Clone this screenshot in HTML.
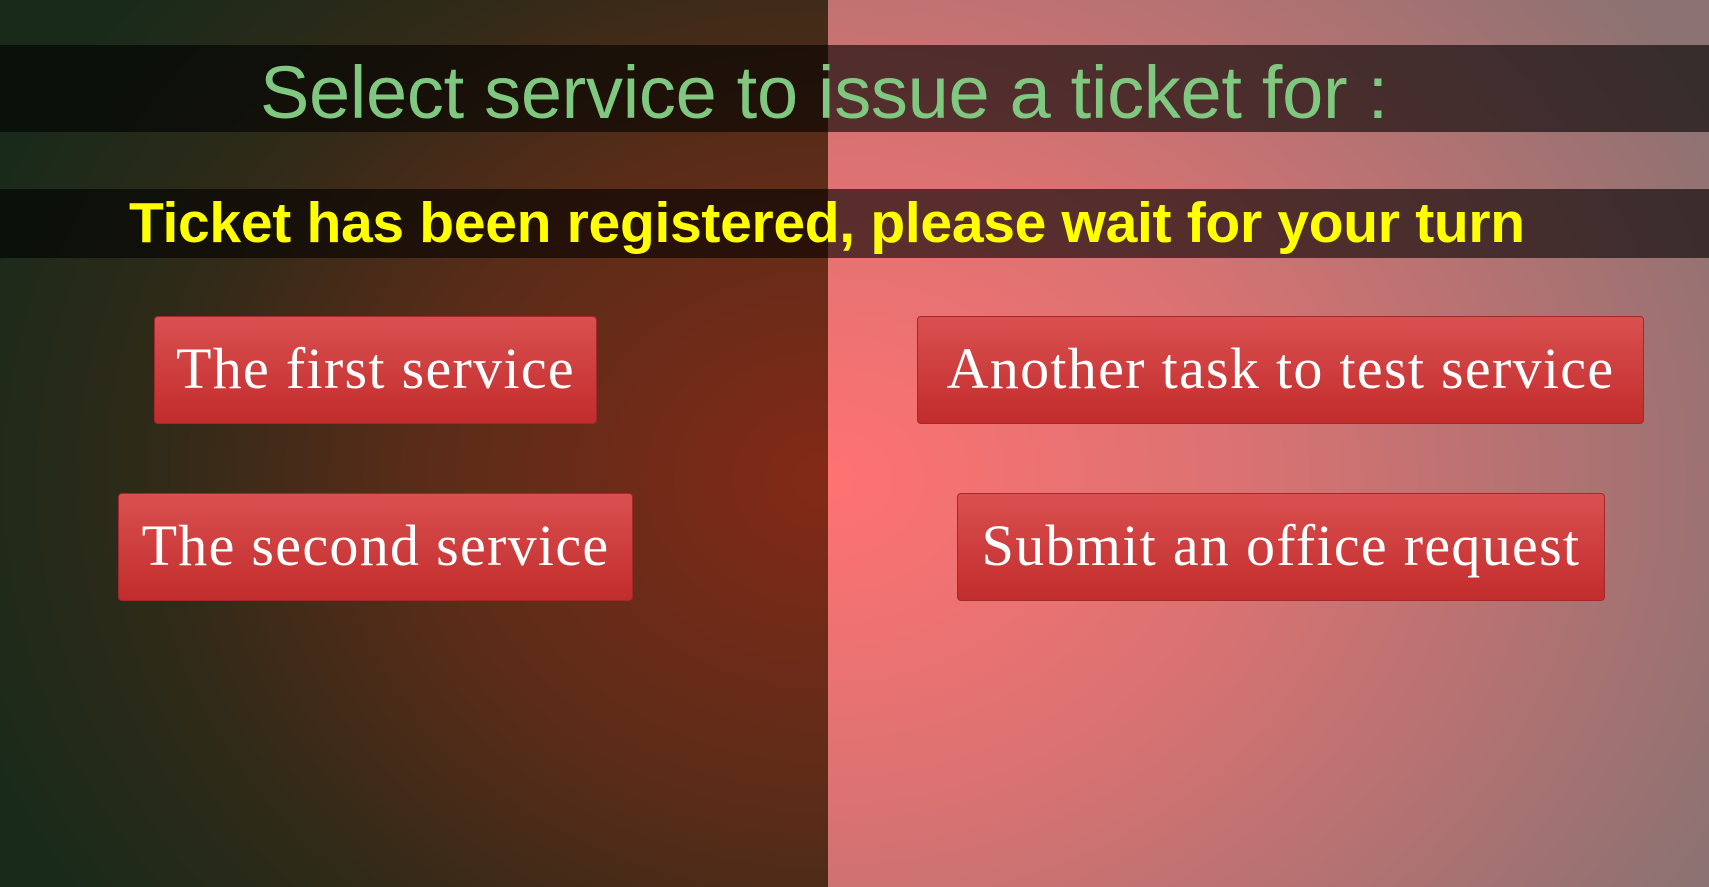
<!DOCTYPE html>
<html><head><meta charset="utf-8"><style>
*{margin:0;padding:0;box-sizing:border-box}
html,body{width:1709px;height:887px;overflow:hidden}
body{position:relative;font-family:"Liberation Sans",sans-serif}
.l{position:absolute;left:0;top:0;width:828px;height:887px;background:radial-gradient(ellipse 900px 750px at 828px 480px,#832a17 0%,#5a2c18 45%,#302a18 75%,#1a2a1a 100%)}
.r{position:absolute;left:828px;top:0;width:881px;height:887px;background:radial-gradient(ellipse 1000px 800px at 0px 480px,#ff7272 0%,#dc7272 40%,#b57272 70%,#8c7272 100%)}
.band{position:absolute;left:0;width:1709px;background:rgba(0,0,0,0.6)}
.t1{top:45px;height:87px;color:#80c880;font-size:74px;line-height:96px;padding-left:260px;white-space:nowrap;letter-spacing:-0.3px;overflow:hidden}
.t2{top:189px;height:69px;color:#ffff00;font-size:57px;font-weight:bold;line-height:68px;padding-left:129px;white-space:nowrap;letter-spacing:-0.3px}
.b{position:absolute;height:108px;border:1px solid #a52828;border-radius:4px;background:linear-gradient(#da5050,#c22c2c);color:#fff;font-family:"Liberation Serif",serif;font-size:58px;line-height:104px;text-align:center;white-space:nowrap;letter-spacing:1.3px}
</style></head><body>
<div class="l"></div><div class="r"></div>
<div class="band t1">Select service to issue a ticket for :</div>
<div class="band t2">Ticket has been registered, please wait for your turn</div>
<div class="b" style="left:154px;top:316px;width:443px">The first service</div>
<div class="b" style="left:118px;top:493px;width:515px">The second service</div>
<div class="b" style="left:917px;top:316px;width:727px">Another task to test service</div>
<div class="b" style="left:957px;top:493px;width:648px">Submit an office request</div>
</body></html>
